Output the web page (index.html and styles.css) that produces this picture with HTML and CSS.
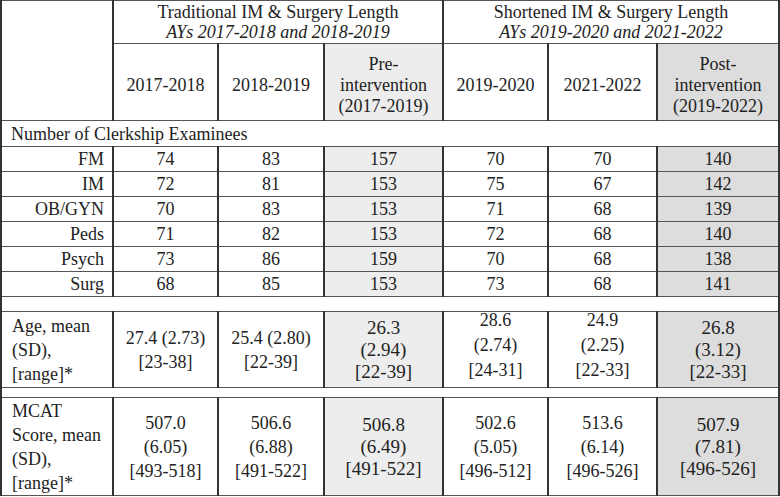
FILE: index.html
```html
<!DOCTYPE html>
<html lang="en">
<head>
<meta charset="utf-8">
<title>Clerkship Examinees</title>
<link rel="stylesheet" href="styles.css">
</head>
<body>
<table class="grid">
  <colgroup>
    <col class="c-label">
    <col class="c-y1">
    <col class="c-y2">
    <col class="c-pre">
    <col class="c-y3">
    <col class="c-y4">
    <col class="c-post">
  </colgroup>
  <tr class="r-h1">
    <td rowspan="2" class="corner"></td>
    <td colspan="3" class="group">Traditional IM &amp; Surgery Length<br><em>AYs 2017-2018 and 2018-2019</em></td>
    <td colspan="3" class="group">Shortened IM &amp; Surgery Length<br><em>AYs 2019-2020 and 2021-2022</em></td>
  </tr>
  <tr class="r-h2">
    <td class="yr">2017-2018</td>
    <td class="yr">2018-2019</td>
    <td class="yr pre">Pre-<br>intervention<br>(2017-2019)</td>
    <td class="yr">2019-2020</td>
    <td class="yr">2021-2022</td>
    <td class="yr post">Post-<br>intervention<br>(2019-2022)</td>
  </tr>
  <tr class="r-sec">
    <td colspan="7" class="section">Number of Clerkship Examinees</td>
  </tr>
  <tr class="r-data"><td class="lab">FM</td><td>74</td><td>83</td><td class="pre">157</td><td>70</td><td>70</td><td class="post">140</td></tr>
  <tr class="r-data"><td class="lab">IM</td><td>72</td><td>81</td><td class="pre">153</td><td>75</td><td>67</td><td class="post">142</td></tr>
  <tr class="r-data"><td class="lab">OB/GYN</td><td>70</td><td>83</td><td class="pre">153</td><td>71</td><td>68</td><td class="post">139</td></tr>
  <tr class="r-data"><td class="lab">Peds</td><td>71</td><td>82</td><td class="pre">153</td><td>72</td><td>68</td><td class="post">140</td></tr>
  <tr class="r-data"><td class="lab">Psych</td><td>73</td><td>86</td><td class="pre">159</td><td>70</td><td>68</td><td class="post">138</td></tr>
  <tr class="r-data"><td class="lab">Surg</td><td>68</td><td>85</td><td class="pre">153</td><td>73</td><td>68</td><td class="post">141</td></tr>
  <tr class="r-gap1"><td colspan="7" class="gap"></td></tr>
  <tr class="r-age">
    <td class="stat-lab">Age, mean<br>(SD),<br>[range]*</td>
    <td class="stat">27.4 (2.73)<br>[23-38]</td>
    <td class="stat">25.4 (2.80)<br>[22-39]</td>
    <td class="stat pre big">26.3<br>(2.94)<br>[22-39]</td>
    <td class="stat top"><div class="lift">28.6<br>(2.74)<br>[24-31]</div></td>
    <td class="stat top"><div class="lift">24.9<br>(2.25)<br>[22-33]</div></td>
    <td class="stat post big">26.8<br>(3.12)<br>[22-33]</td>
  </tr>
  <tr class="r-gap2"><td colspan="7" class="gap"></td></tr>
  <tr class="r-mcat">
    <td class="stat-lab">MCAT<br>Score, mean<br>(SD),<br>[range]*</td>
    <td class="stat">507.0<br>(6.05)<br>[493-518]</td>
    <td class="stat">506.6<br>(6.88)<br>[491-522]</td>
    <td class="stat pre big">506.8<br>(6.49)<br>[491-522]</td>
    <td class="stat">502.6<br>(5.05)<br>[496-512]</td>
    <td class="stat">513.6<br>(6.14)<br>[496-526]</td>
    <td class="stat post big">507.9<br>(7.81)<br>[496-526]</td>
  </tr>
</table>
</body>
</html>
```

FILE: styles.css
```css
html, body {
  margin: 0;
  padding: 0;
  background: #ffffff;
}

body {
  font-family: "Liberation Serif", "DejaVu Serif", serif;
  font-size: 18px;
  color: #222222;
}

.grid {
  border-collapse: collapse;
  table-layout: fixed;
  width: 779px;
  font-family: "Liberation Serif", "DejaVu Serif", serif;
}

.c-label { width: 112px; }
.c-y1 { width: 105px; }
.c-y2 { width: 106px; }
.c-pre { width: 119px; }
.c-y3 { width: 105px; }
.c-y4 { width: 109px; }
.c-post { width: 122px; }

.grid td {
  font-family: "Liberation Serif", "DejaVu Serif", serif;
  border-top: 1px solid #555555;
  border-bottom: 1px solid #555555;
  border-left: 2px solid #333333;
  border-right: 2px solid #333333;
  padding: 0;
  text-align: center;
  vertical-align: middle;
  line-height: 24px;
  white-space: nowrap;
}

.r-h1 td { height: 42px; }
.r-h2 td { height: 76px; }
.r-sec td { height: 25px; }
.r-data td { height: 24px; }
.r-gap1 td { height: 14px; }
.r-age td { height: 75px; }
.r-gap2 td { height: 9px; }
.r-mcat td { height: 97px; }

.grid .group {
  line-height: 20px;
}

.group em {
  font-style: italic;
}

.grid .yr {
  line-height: 21px;
  height: 70px;
  padding-top: 6px;
}

.grid .pre {
  background: #ededed;
}

.grid .post {
  background: #dddddd;
}

.grid .section {
  text-align: left;
  padding-left: 9px;
  line-height: 24px;
}

.grid .lab {
  text-align: right;
  padding-right: 8px;
}

.grid .stat-lab {
  text-align: left;
  padding-left: 10px;
  line-height: 24px;
}

.grid .stat {
  line-height: 24px;
}

.grid .stat.top {
  vertical-align: top;
}

.lift {
  line-height: 25px;
  margin-top: -4px;
}

.grid .stat.big {
  font-size: 19px;
  line-height: 22px;
}

.grid .gap {
  line-height: 0;
  font-size: 0;
}
```
